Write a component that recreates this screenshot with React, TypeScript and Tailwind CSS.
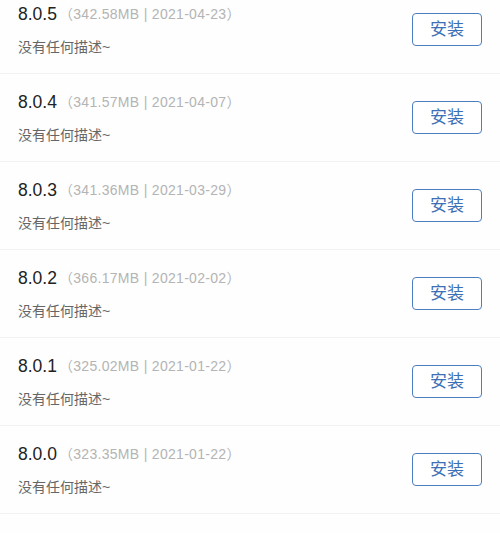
import React from 'react';

interface Version {
  version: string;
  size: string;
  date: string;
}

const versions: Version[] = [
  { version: '8.0.5', size: '342.58MB', date: '2021-04-23' },
  { version: '8.0.4', size: '341.57MB', date: '2021-04-07' },
  { version: '8.0.3', size: '341.36MB', date: '2021-03-29' },
  { version: '8.0.2', size: '366.17MB', date: '2021-02-02' },
  { version: '8.0.1', size: '325.02MB', date: '2021-01-22' },
  { version: '8.0.0', size: '323.35MB', date: '2021-01-22' },
];

const font = { fontFamily: '"Liberation Sans", "Noto Sans CJK SC", sans-serif' };

const App: React.FC = () => {
  return (
    <div className="w-[500px] h-[533px] overflow-hidden bg-[#fefefe]" style={font}>
      <div className="-mt-[14px]">
        {versions.map((v) => (
          <div
            key={v.version}
            className="h-[88px] flex items-center justify-between pl-[18px] pr-[18px] border-b border-[#f2f2f2]"
          >
            {/* Version info */}
            <div className="flex flex-col">
              <div className="h-[24px] flex items-center whitespace-nowrap">
                <span className="text-[17.5px] text-[#222222]">{v.version}</span>
                <span className="ml-[2px] text-[14px] text-[#b4b4b4] tracking-[0.3px]">
                  （{v.size} | {v.date}）
                </span>
              </div>
              <div className="mt-[11px] h-[20px] leading-[20px] text-[14px] text-[#666666]">
                没有任何描述~
              </div>
            </div>

            <button className="w-[70px] h-[33px] rounded-[4px] border-[1.5px] border-[#4d7ec2] text-[17px] text-[#3d6fb6] flex items-center justify-center bg-white">
              安装
            </button>
          </div>
        ))}
        {/* next row, only its top edge is in view */}
        <div className="h-[88px]" />
      </div>
    </div>
  );
};

export default App;
